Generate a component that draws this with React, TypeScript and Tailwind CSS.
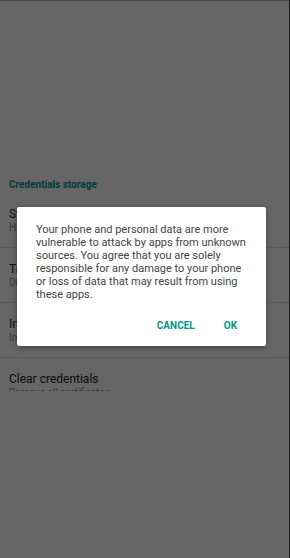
import React from "react";

const rows = [
  ["Storage type", "Hardware-backed"],
  ["Trusted credentials", "Display trusted CA certificates"],
  ["Install from storage", "Install certificates from storage"],
  ["Clear credentials", "Remove all certificates"],
];

const lines = [
  "Your phone and personal data are more",
  "vulnerable to attack by apps from unknown",
  "sources. You agree that you are solely",
  "responsible for any damage to your phone",
  "or loss of data that may result from using",
  "these apps.",
];

export default function App() {
  return (
    <div
      className="relative w-[290px] h-[558px] overflow-hidden bg-white"
      style={{ fontFamily: "Roboto, 'Liberation Sans', sans-serif" }}
    >
      <div className="h-[391px] overflow-hidden">
        <div className="h-[177px]" />
        <div className="px-[9px] h-[16px] leading-[16px] text-[10px] font-bold text-[#009688]">
          Credentials storage
        </div>
        {rows.map(([t, s], i) => (
          <div
            key={i}
            className={`h-[55px] px-[9px] pt-[14px] ${i < 3 ? "border-b border-[#e2e2e2]" : ""}`}
          >
            <div className="text-[12px] leading-[14px] text-[#212121]">{t}</div>
            <div className="text-[10px] leading-[13px] text-[#8a8a8a]">{s}</div>
          </div>
        ))}
      </div>

      <div className="absolute inset-0 bg-black/60" />
      <div className="absolute top-0 left-0 right-0 h-px bg-[#4a4a4a]" />
      <div className="absolute top-0 bottom-0 right-0 w-px bg-[#1c1c1c]" />

      <div className="absolute left-[17px] top-[207px] w-[249px] h-[139px] bg-white rounded-[2px] shadow-[0_2px_6px_rgba(0,0,0,0.35)]">
        <div className="pt-[16px] pl-[19px] text-[11px] leading-[13px] text-[#444444]">
          {lines.map((l, i) => (
            <div key={i} className="whitespace-nowrap">
              {l}
            </div>
          ))}
        </div>
        <div className="flex justify-end items-center pr-[29px] mt-[17px] gap-[29px] text-[10px] font-bold text-[#009688]">
          <span>CANCEL</span>
          <span>OK</span>
        </div>
      </div>
    </div>
  );
}
